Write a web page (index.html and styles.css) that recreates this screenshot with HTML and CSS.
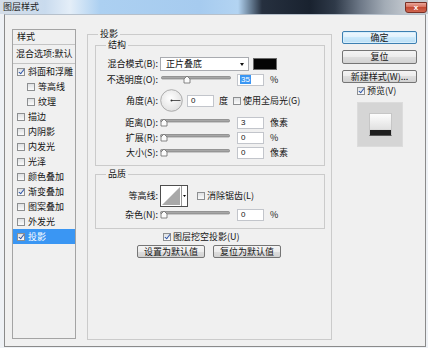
FILE: index.html
```html
<!DOCTYPE html>
<html lang="zh-CN">
<head>
<meta charset="utf-8">
<title>图层样式</title>
<link rel="stylesheet" href="styles.css">
</head>
<body>
<div class="window">
  <div class="titlebar">
    <span class="title">图层样式</span>
    <span class="close">x</span>
  </div>
  <div class="body">
    <div class="list">
      <div class="list-head">样式</div>
      <div class="list-head2">混合选项:默认</div>
      <div class="item"><span class="cb checked"></span>斜面和浮雕</div>
      <div class="item sub"><span class="cb"></span>等高线</div>
      <div class="item sub"><span class="cb"></span>纹理</div>
      <div class="item"><span class="cb"></span>描边</div>
      <div class="item"><span class="cb"></span>内阴影</div>
      <div class="item"><span class="cb"></span>内发光</div>
      <div class="item"><span class="cb"></span>光泽</div>
      <div class="item"><span class="cb"></span>颜色叠加</div>
      <div class="item"><span class="cb checked"></span>渐变叠加</div>
      <div class="item"><span class="cb"></span>图案叠加</div>
      <div class="item"><span class="cb"></span>外发光</div>
      <div class="item selected"><span class="cb checked"></span>投影</div>
    </div>

    <fieldset class="main">
      <legend>投影</legend>
      <fieldset class="group structure">
        <legend>结构</legend>
        <div class="row r1">
          <span class="lbl">混合模式(B):</span>
          <div class="select"><span>正片叠底</span><span class="arrow"></span></div>
          <span class="swatch-color"></span>
        </div>
        <div class="row r2">
          <span class="lbl">不透明度(O):</span>
          <svg class="slider" width="70" height="9" viewBox="0 0 70 9"><rect x="0.5" y="1.5" width="69" height="2.5" rx="1" fill="#a7a7a7" stroke="#6f6f6f" stroke-width="0.6"/><polygon points="23,8 23,4 26,1 29,4 29,8" fill="#fbfbfb" stroke="#6b6b6b" stroke-width="0.8"/></svg>
          <span class="num"><span class="sel">35</span></span>
          <span class="unit">%</span>
        </div>
        <div class="row r3">
          <span class="lbl">角度(A):</span>
          <svg class="dial" width="23" height="23" viewBox="0 0 23 23"><defs><radialGradient id="dg" cx="0.45" cy="0.4" r="0.7"><stop offset="0" stop-color="#ffffff"/><stop offset="1" stop-color="#dcdcdc"/></radialGradient></defs><circle cx="11.5" cy="11.5" r="10.8" fill="url(#dg)" stroke="#9c9c9c" stroke-width="0.8"/><line x1="11.5" y1="11.5" x2="20.5" y2="11.5" stroke="#444" stroke-width="0.9"/><circle cx="11.5" cy="11.5" r="1" fill="#333"/></svg>
          <span class="num angle">0</span>
          <span class="unit deg">度</span>
          <span class="cb global"></span>
          <span class="cbtext">使用全局光(G)</span>
        </div>
        <div class="row r4">
          <span class="lbl">距离(D):</span>
          <svg class="slider" width="70" height="9" viewBox="0 0 70 9"><rect x="0.5" y="1.5" width="69" height="2.5" rx="1" fill="#a7a7a7" stroke="#6f6f6f" stroke-width="0.6"/><polygon points="1,8 1,4 4,1 7,4 7,8" fill="#fbfbfb" stroke="#6b6b6b" stroke-width="0.8"/></svg>
          <span class="num">3</span>
          <span class="unit">像素</span>
        </div>
        <div class="row r5">
          <span class="lbl">扩展(R):</span>
          <svg class="slider" width="70" height="9" viewBox="0 0 70 9"><rect x="0.5" y="1.5" width="69" height="2.5" rx="1" fill="#a7a7a7" stroke="#6f6f6f" stroke-width="0.6"/><polygon points="1,8 1,4 4,1 7,4 7,8" fill="#fbfbfb" stroke="#6b6b6b" stroke-width="0.8"/></svg>
          <span class="num">0</span>
          <span class="unit">%</span>
        </div>
        <div class="row r6">
          <span class="lbl">大小(S):</span>
          <svg class="slider" width="70" height="9" viewBox="0 0 70 9"><rect x="0.5" y="1.5" width="69" height="2.5" rx="1" fill="#a7a7a7" stroke="#6f6f6f" stroke-width="0.6"/><polygon points="1,8 1,4 4,1 7,4 7,8" fill="#fbfbfb" stroke="#6b6b6b" stroke-width="0.8"/></svg>
          <span class="num">0</span>
          <span class="unit">像素</span>
        </div>
      </fieldset>

      <fieldset class="group quality">
        <legend>品质</legend>
        <div class="row q1">
          <span class="lbl">等高线:</span>
          <svg class="contour" width="28" height="22" viewBox="0 0 28 22"><rect x="0.5" y="0.5" width="27" height="21" fill="#fff" stroke="#4d4d4d"/><polygon points="2,20 20,2 20,20" fill="#a8a8a8"/><line x1="21.5" y1="1" x2="21.5" y2="21" stroke="#9a9a9a"/><polygon points="23,10 26,10 24.5,12" fill="#000"/></svg>
          <span class="cb anti"></span>
          <span class="cbtext">消除锯齿(L)</span>
        </div>
        <div class="row q2">
          <span class="lbl">杂色(N):</span>
          <svg class="slider" width="70" height="9" viewBox="0 0 70 9"><rect x="0.5" y="1.5" width="69" height="2.5" rx="1" fill="#a7a7a7" stroke="#6f6f6f" stroke-width="0.6"/><polygon points="1,8 1,4 4,1 7,4 7,8" fill="#fbfbfb" stroke="#6b6b6b" stroke-width="0.8"/></svg>
          <span class="num">0</span>
          <span class="unit">%</span>
        </div>
      </fieldset>

      <div class="knock"><span class="cb checked"></span><span class="cbtext">图层挖空投影(U)</span></div>
      <div class="defaults">
        <span class="btn small">设置为默认值</span>
        <span class="btn small">复位为默认值</span>
      </div>
    </fieldset>

    <div class="side">
      <span class="btn primary">确定</span>
      <span class="btn b2">复位</span>
      <span class="btn b3">新建样式(W)...</span>
      <div class="preview-check"><span class="cb checked"></span><span class="cbtext">预览(V)</span></div>
      <div class="preview"><div class="swatch"></div></div>
    </div>
  </div>
</div>
</body>
</html>
```

FILE: styles.css
```css
* { box-sizing: border-box; }
html, body { margin: 0; padding: 0; }
body {
  width: 431px;
  height: 348px;
  background: #ffffff;
  font-family: "Noto Sans CJK SC", "Liberation Sans", sans-serif;
  font-size: 9px;
  color: #141414;
  overflow: hidden;
}
.window {
  width: 428px;
  height: 348px;
  background: #eef1f5;
}
.titlebar {
  height: 14px;
  display: flex;
  justify-content: space-between;
  align-items: flex-start;
  background: linear-gradient(90deg, #d4dde8 0px, #c9dbee 45px, #e4eef8 70px, #acd0f1 100px, #a6cbef 200px, #b3d4f2 238px, #6b8299 250px, #26303f 262px, #19222f 310px, #2f3a49 335px, #6d7887 360px, #a3acb6 385px, #bfc5cc 405px, #c5cad0 428px);
}
.title {
  margin-left: 3px;
  margin-top: 2px;
  line-height: 10px;
  color: #1d1d1d;
}
.close {
  width: 22px;
  height: 11px;
  margin-top: 2px;
  margin-right: 1px;
  border: 1px solid #7a3024;
  border-radius: 0 0 3px 3px;
  background: linear-gradient(#e9a79a, #d66a55 50%, #c44a33 50%, #cf6650);
  color: #fff;
  font: bold 8px/9px "Liberation Sans", sans-serif;
  text-align: center;
}
.body {
  margin-left: 4px;
  width: 422px;
  height: 333px;
  border: 1px solid #8a8a8a;
  border-top-color: #b6c0cb;
  background: #f0f0f0;
  display: flex;
  align-items: flex-start;
  padding: 14px 0 0 7px;
}

/* styles list */
.list {
  flex: none;
  width: 64px;
  height: 310px;
  border: 1px solid #a4a4a4;
  background: #f0f0f0;
}
.list-head {
  height: 15px;
  line-height: 14px;
  padding-left: 4px;
  border-bottom: 1px solid #c4c4c4;
}
.list-head2 {
  height: 19px;
  line-height: 17px;
  padding-left: 3px;
  border-bottom: 1px solid #c4c4c4;
  white-space: nowrap;
}
.item {
  height: 15px;
  display: flex;
  align-items: center;
  gap: 3px;
  padding-left: 4px;
  white-space: nowrap;
}
.item.sub { padding-left: 14px; }
.item.selected { background: #3a96f3; color: #fff; }

/* checkbox */
.cb {
  position: relative;
  flex: none;
  display: inline-block;
  width: 8px;
  height: 8px;
  border: 1px solid #8d8f91;
  background: linear-gradient(#dfe1e3, #fbfbfb);
}
.cb.checked::after {
  content: "";
  position: absolute;
  left: 2px;
  top: -1px;
  width: 2px;
  height: 5px;
  border: solid #2d55a8;
  border-width: 0 1.4px 1.4px 0;
  transform: rotate(38deg);
}
.cbtext { margin-left: 2px; white-space: nowrap; line-height: 10px; }

/* main fieldset */
fieldset { margin: 0; min-width: 0; }
legend { padding: 0 2px; line-height: 10px; font-size: 9px; }
.main {
  flex: none;
  margin-left: 11px;
  width: 245px;
  height: 311px;
  border: 1px solid #cbcbcb;
  padding: 1px 6px 0 7px;
}
.main > legend { margin-left: 3px; }
.group {
  border: 1px solid #cbcbcb;
  padding: 7px 5px 5px 0;
}
.group > legend { margin-left: 10px; }
.quality { margin-top: 3px; padding: 6px 5px 7px 0; }

.row {
  display: flex;
  align-items: center;
  white-space: nowrap;
}
.lbl {
  flex: none;
  width: 62px;
  text-align: right;
  line-height: 10px;
}
.r1 { height: 14px; }
.r2 { height: 13px; margin-top: 2px; }
.r3 { height: 23px; margin-top: 3px; }
.r4 { height: 15px; margin-top: 3px; }
.r5 { height: 15px; }
.r6 { height: 15px; }
.q1 { height: 22px; }
.q2 { height: 13px; margin-top: 1px; }

.select {
  margin-left: 2px;
  width: 89px;
  height: 14px;
  border: 1px solid #a9abb0;
  background: #fff;
  display: flex;
  align-items: center;
  justify-content: space-between;
  padding: 0 4px 0 5px;
  line-height: 10px;
}
.arrow {
  width: 0;
  height: 0;
  border-left: 2.5px solid transparent;
  border-right: 2.5px solid transparent;
  border-top: 3px solid #111;
}
.swatch-color {
  margin-left: 4px;
  width: 24px;
  height: 12px;
  background: #050505;
  border: 1px solid #6a6a6a;
}
.slider { flex: none; margin-left: 2px; display: block; }
.r2 .slider { margin-left: 3px; }
.num {
  flex: none;
  margin-left: 7px;
  width: 27px;
  height: 12px;
  border: 1px solid #c2c5cb;
  background: #fff;
  padding-left: 3px;
  font-family: "Liberation Sans", sans-serif;
  font-size: 8px;
  line-height: 10px;
}
.r2 .num { margin-left: 6px; padding-left: 2px; }
.sel { background: #3a96f3; color: #fff; padding: 0 1px; }
.unit { margin-left: 6px; line-height: 10px; }
.dial { flex: none; margin-left: 2px; display: block; }
.num.angle { margin-left: 4px; }
.unit.deg { margin-left: 5px; }
.cb.global { margin-left: 5px; }
.contour { flex: none; margin-left: 2px; display: block; }
.cb.anti { margin-left: 9px; }

.knock {
  margin-top: 2px;
  height: 11px;
  display: flex;
  align-items: center;
  padding-left: 68px;
}
.defaults {
  margin-top: 3px;
  display: flex;
  gap: 8px;
  padding-left: 42px;
}

/* buttons */
.btn {
  display: flex;
  align-items: center;
  justify-content: center;
  height: 13px;
  border: 1px solid #757575;
  border-radius: 2px;
  background: linear-gradient(#f4f4f4, #ececec 50%, #dedede 50%, #d2d2d2);
  line-height: 10px;
  white-space: nowrap;
}
.btn.small { width: 68px; }
.side {
  flex: none;
  margin-left: 10px;
  width: 75px;
  display: flex;
  flex-direction: column;
  padding-top: 2px;
}
.side .btn { width: 75px; }
.btn.primary {
  border-color: #3c7fb1;
  background: linear-gradient(#eef7fd, #e0f1fc 50%, #cbe9fb 50%, #b9def5);
  box-shadow: inset 0 0 0 1px #d6eefc;
}
.btn.b2 { margin-top: 6px; height: 14px; }
.btn.b3 { margin-top: 6px; }
.preview-check {
  margin-top: 3px;
  height: 10px;
  display: flex;
  align-items: center;
  padding-left: 15px;
}
.preview {
  margin-top: 6px;
  margin-left: 15px;
  width: 46px;
  height: 45px;
  background: #d5d5d5;
  border: 1px solid #dcdcdc;
  display: flex;
  align-items: center;
  justify-content: center;
}
.swatch {
  width: 23px;
  height: 23px;
  background: linear-gradient(#fdfdfd, #e2e2e2 70%, #d2d2d2 78%, #1e1e1e 78%, #1e1e1e 100%);
  border: 1px solid #c6c6c6;
  border-bottom-color: #555;
}
```
